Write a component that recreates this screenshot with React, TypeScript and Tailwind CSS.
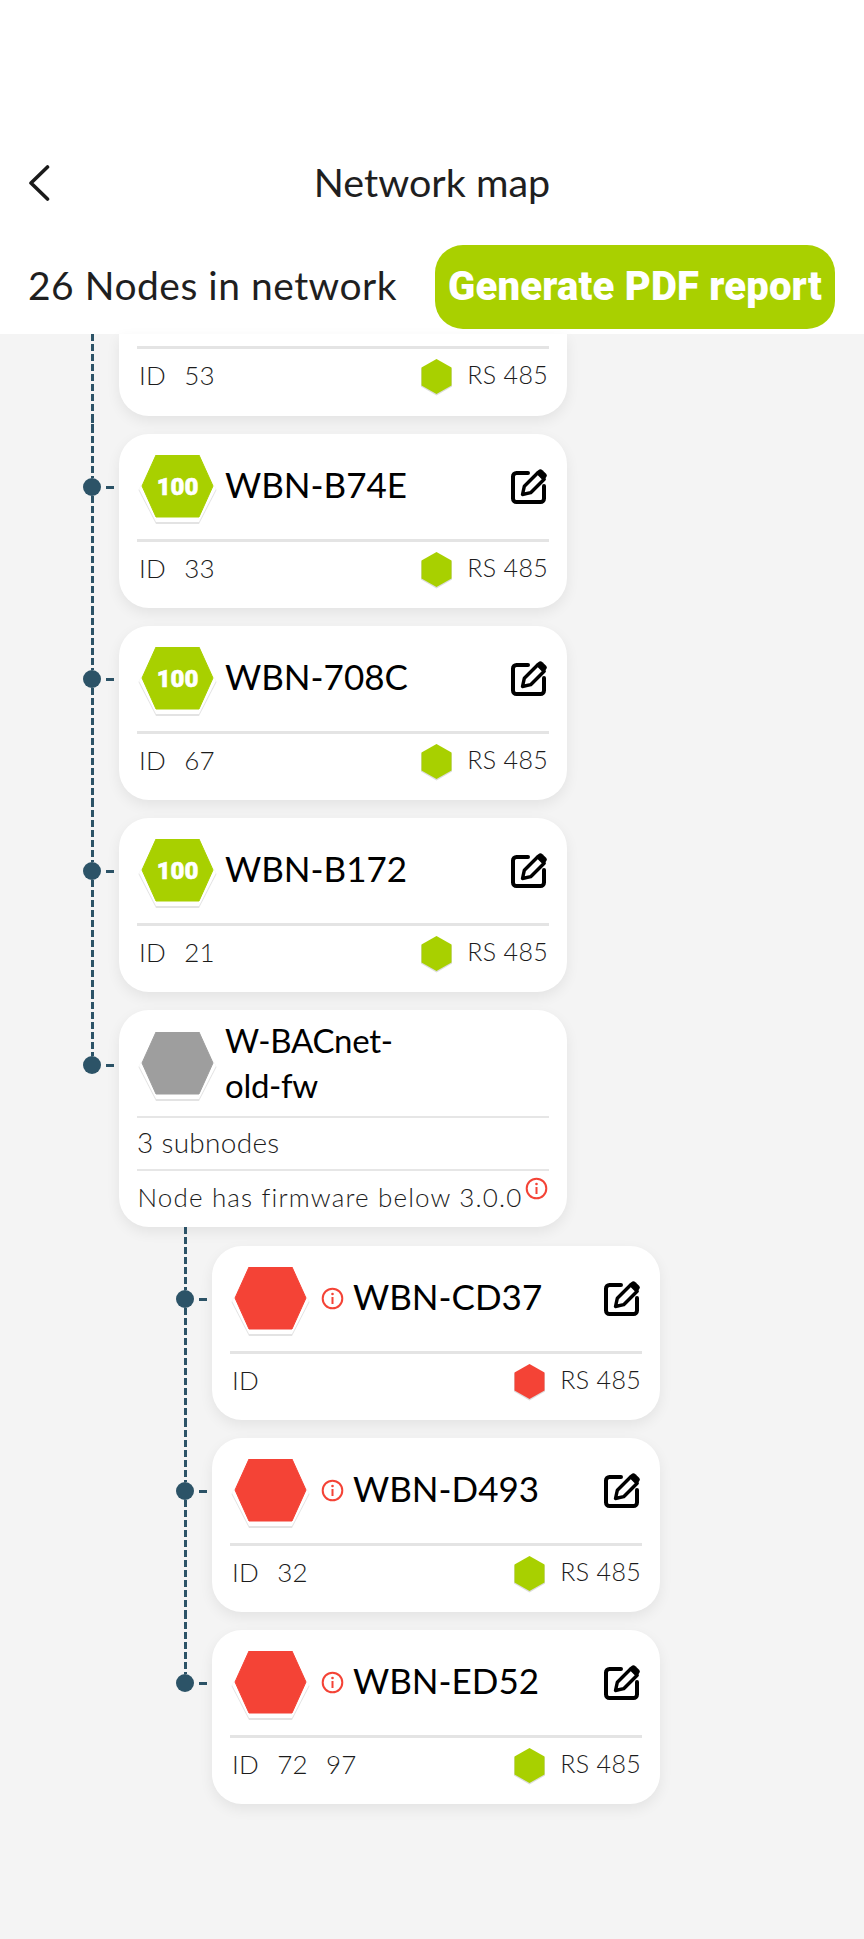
import React from "react";

const GREEN = "#a8d000";
const RED = "#f44336";
const GRAY = "#9e9e9e";

function Hex({ color, label }: { color: string; label?: string }) {
  return (
    <div className="relative w-[79px] h-[70px] shrink-0">
      <svg width="79" height="70" viewBox="0 0 79 70" className="block">
        <polygon points="18,3 61,3 78.5,35 61,69 18,69 0.5,35" fill="#e3e3e3" />
        <polygon points="18,2 61,2 78,34 61,67 18,67 1,34" fill="#ffffff" />
        <polygon points="18,0 61,0 75,31 61,62 18,62 4,31" fill={color} stroke={color} strokeWidth="1" strokeLinejoin="round" />
        {label && (
          <text x="39.5" y="39.5" textAnchor="middle" fill="#fff" fontSize="24" fontWeight="900" fontFamily="Roboto, sans-serif" stroke="#fff" strokeWidth="0.6">
            {label}
          </text>
        )}
      </svg>
    </div>
  );
}

function SmallHex({ color }: { color: string }) {
  return (
    <svg width="33" height="37" viewBox="0 0 33 37" className="block shrink-0">
      <polygon points="16.5,1 32,9.5 32,27.5 16.5,36.5 1,27.5 1,9.5" fill="#dcdcdc" />
      <polygon points="16.5,0 31.5,8.5 31.5,26.5 16.5,35 1.5,26.5 1.5,8.5" fill={color} />
    </svg>
  );
}

function EditIcon() {
  return (
    <svg width="36" height="36" viewBox="0 0 36 36" fill="none" className="block shrink-0">
      <path d="M17 5H5.500a3.500 3.500 0 0 0-3.500 3.500v22a3.500 3.500 0 0 0 3.500 3.500h24a3.500 3.500 0 0 0 3.500-3.500V18" stroke="#000" strokeWidth="4" strokeLinecap="round" />
      <path d="M11.500 26.500l1.800-8.200L26.800 4.800l6.400 6.400L19.700 24.700z" fill="#fff" stroke="#000" strokeWidth="3.400" strokeLinejoin="round" />
      <path d="M25 4.500l2.300-2.300a3 3 0 0 1 4.200 0l3.300 3.300a3 3 0 0 1 0 4.200l-2.300 2.300z" fill="#000" />
    </svg>
  );
}

function InfoIcon() {
  return (
    <svg width="23" height="23" viewBox="0 0 23 23" fill="none" className="block shrink-0">
      <circle cx="11.500" cy="11.500" r="9.800" stroke={RED} strokeWidth="2" />
      <circle cx="11.500" cy="7" r="1.300" fill={RED} />
      <rect x="10.500" y="10" width="2" height="7" fill={RED} />
    </svg>
  );
}

function Dashed({ className }: { className: string }) {
  return (
    <div
      className={
        "w-[3px] ml-[7.5px] bg-[repeating-linear-gradient(to_bottom,#2c5367_0,#2c5367_7px,transparent_7px,transparent_10px)] " +
        className
      }
    />
  );
}

function Rail({ top, last }: { top: string; last?: boolean }) {
  return (
    <div className="w-[36px] shrink-0 flex flex-col">
      <Dashed className={top} />
      <div className="flex items-center gap-[5px]">
        <div className="w-[18px] h-[18px] rounded-full bg-[#2c5367]" />
        <div className="w-[8px] h-[3px] bg-[#2c5367]" />
      </div>
      {!last && <Dashed className="flex-1" />}
    </div>
  );
}

const cardClass = "w-[448px] bg-white shadow-[0_5px_14px_rgba(0,0,0,0.07)]";
const bodyText = "text-[26px] text-[#1c1c1c] font-light font-['Lato',sans-serif] tracking-[0.3px]";

function Footer({ ids, dot }: { ids: string[]; dot: string }) {
  return (
    <div className={"flex items-center justify-between pl-[2px] pr-[1px] h-[57px] " + bodyText}>
      <div className="flex gap-[18px] pb-[5px]">
        <span>ID</span>
        {ids.map((id) => (
          <span key={id}>{id}</span>
        ))}
      </div>
      <div className="flex items-center gap-[14px]">
        <SmallHex color={dot} />
        <span className="text-[25px] pb-[5px]">RS 485</span>
      </div>
    </div>
  );
}

function NodeCard({ name, label, color, ids, dot, warn }: { name: string; label?: string; color: string; ids: string[]; dot: string; warn?: boolean }) {
  return (
    <div className={cardClass + " rounded-[30px] h-[174px] px-[18px]"}>
      <div className="h-[105px] flex items-center pl-[1px] pb-[1px]">
        <div className="pt-[8px]">
          <Hex color={color} label={label} />
        </div>
        {warn ? (
          <div className="ml-[11px] mr-[9px]">
            <InfoIcon />
          </div>
        ) : (
          <div className="w-[8px]" />
        )}
        <span className="text-[35px] text-black font-['Lato',sans-serif] flex-1 pb-[4px]">{name}</span>
        <div className="mr-[2px]">
          <EditIcon />
        </div>
      </div>
      <div className="h-[3px] bg-[#e4e4e4]" />
      <Footer ids={ids} dot={dot} />
    </div>
  );
}

function Row({ sub, top, last, gap, children }: { sub?: boolean; top: string; last?: boolean; gap: string; children: React.ReactNode }) {
  return (
    <div className={"flex " + (sub ? "pl-[176px]" : "pl-[83px]")}>
      <Rail top={top} last={last} />
      <div className={gap}>{children}</div>
    </div>
  );
}

export default function App() {
  return (
    <div className="w-[864px] h-[1939px] bg-[#f4f4f4] font-['Lato',sans-serif] flex flex-col">
      <header className="bg-white h-[334px] shrink-0 flex flex-col">
        <div className="h-[136px]" />
        <div className="relative h-[94px] flex items-center justify-center">
          <svg width="22" height="36" viewBox="0 0 22 36" fill="none" className="absolute left-[28px] top-[29px]">
            <path d="M19.500 2L3 18l16.500 16" stroke="#1a1a1a" strokeWidth="3.600" strokeLinecap="round" strokeLinejoin="round" />
          </svg>
          <span className="text-[39.5px] text-[#1f1f1f] leading-none pb-[2px]">Network map</span>
        </div>
        <div className="flex items-center pl-[28px] pt-[15px]">
          <span className="text-[39px] text-[#1f1f1f] flex-1 leading-none tracking-[0.5px] pb-[4px]">26 Nodes in network</span>
          <button className="w-[400px] h-[84px] mr-[29px] rounded-[28px] bg-[#a9d000] text-white text-[40px] tracking-[0.2px] font-black font-['Roboto',sans-serif] flex items-center justify-center">
            Generate PDF report
          </button>
        </div>
      </header>

      <main className="flex-1">
        <div className="flex pl-[83px] h-[82px]">
          <div className="w-[36px] shrink-0">
            <Dashed className="h-[100px]" />
          </div>
          <div className={cardClass + " rounded-b-[30px] h-[82px] px-[18px] pt-[12px]"}>
            <div className="h-[3px] bg-[#e4e4e4]" />
            <Footer ids={["53"]} dot={GREEN} />
          </div>
        </div>

        <Row top="h-[62px]" gap="mt-[18px]">
          <NodeCard name="WBN-B74E" label="100" color={GREEN} ids={["33"]} dot={GREEN} />
        </Row>
        <Row top="h-[62px]" gap="mt-[18px]">
          <NodeCard name="WBN-708C" label="100" color={GREEN} ids={["67"]} dot={GREEN} />
        </Row>
        <Row top="h-[62px]" gap="mt-[18px]">
          <NodeCard name="WBN-B172" label="100" color={GREEN} ids={["21"]} dot={GREEN} />
        </Row>
        <Row top="h-[64px]" gap="mt-[18px]" last>
          <div className={cardClass + " rounded-[30px] h-[217px] px-[18px]"}>
            <div className="h-[106px] flex items-center pl-[1px]">
              <div className="pt-[8px]">
                <Hex color={GRAY} />
              </div>
              <div className="ml-[8px] text-[33px] leading-[45px] tracking-[-0.3px] text-black w-[200px]">W-BACnet-<br />old-fw</div>
            </div>
            <div className="h-[2px] bg-[#e6e6e6]" />
            <div className={"h-[51px] flex items-center pb-[4px] text-[28px] " + bodyText}>3 subnodes</div>
            <div className="h-[2px] bg-[#e6e6e6]" />
            <div className={"flex items-start pt-[6px] " + bodyText}>
              <span className="pt-[4px] pl-[0.5px] leading-[32px] tracking-[1.15px] whitespace-nowrap">Node has firmware below 3.0.0</span>
              <div className="ml-[3px]">
                <InfoIcon />
              </div>
            </div>
          </div>
        </Row>

        <Row sub top="h-[63px]" gap="mt-[19px]">
          <NodeCard name="WBN-CD37" color={RED} ids={[]} dot={RED} warn />
        </Row>
        <Row sub top="h-[62px]" gap="mt-[18px]">
          <NodeCard name="WBN-D493" color={RED} ids={["32"]} dot={GREEN} warn />
        </Row>
        <Row sub top="h-[62px]" gap="mt-[18px]" last>
          <NodeCard name="WBN-ED52" color={RED} ids={["72", "97"]} dot={GREEN} warn />
        </Row>
      </main>
    </div>
  );
}
